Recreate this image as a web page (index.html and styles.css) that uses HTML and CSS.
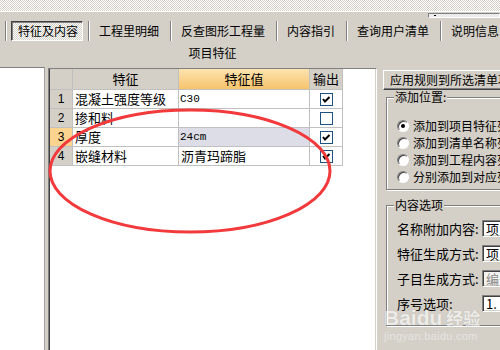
FILE: index.html
```html
<!DOCTYPE html>
<html lang="zh">
<head>
<meta charset="utf-8">
<title>项目特征</title>
<link rel="stylesheet" href="styles.css">
</head>
<body>
<div class="band"></div>
<div class="strip"><div class="slider"><span class="dot"></span></div></div>
<div class="tabs">
  <span class="sep"></span>
  <span class="tab active">特征及内容</span>
  <span class="sep"></span>
  <span class="tab">工程里明细</span>
  <span class="sep"></span>
  <span class="tab">反查图形工程量</span>
  <span class="sep"></span>
  <span class="tab">内容指引</span>
  <span class="sep"></span>
  <span class="tab">查询用户清单</span>
  <span class="sep"></span>
  <span class="tab">说明信息</span>
</div>
<div class="main">
  <div class="left"></div>
  <div class="center">
    <div class="title">项目特征</div>
    <div class="panel">
      <div class="grid">
        <div class="hd"></div>
        <div class="hd">特征</div>
        <div class="hd hd-sel">特征值</div>
        <div class="hd">输出</div>

        <div class="num">1</div>
        <div class="cell">混凝土强度等级</div>
        <div class="cell val">C30</div>
        <div class="cell chk"><span class="box"><svg viewBox="0 0 11 11" width="11" height="11"><polyline points="2,5 4,7.5 8.5,3" fill="none" stroke="#000" stroke-width="2"/></svg></span></div>

        <div class="num">2</div>
        <div class="cell">掺和料</div>
        <div class="cell val"></div>
        <div class="cell chk"><span class="box"></span></div>

        <div class="num num-sel">3</div>
        <div class="cell">厚度</div>
        <div class="cell val val-sel">24cm</div>
        <div class="cell chk"><span class="box"><svg viewBox="0 0 11 11" width="11" height="11"><polyline points="2,5 4,7.5 8.5,3" fill="none" stroke="#000" stroke-width="2"/></svg></span></div>

        <div class="num">4</div>
        <div class="cell">嵌缝材料</div>
        <div class="cell">沥青玛蹄脂</div>
        <div class="cell chk"><span class="box"><svg viewBox="0 0 11 11" width="11" height="11"><polyline points="2,5 4,7.5 8.5,3" fill="none" stroke="#000" stroke-width="2"/></svg></span></div>
      </div>
    </div>
  </div>
  <div class="right">
    <div class="btn">应用规则到所选清单项</div>
    <fieldset class="grp grp1">
      <legend>添加位置:</legend>
      <div class="radio-row"><span class="radio on"></span>添加到项目特征列</div>
      <div class="radio-row"><span class="radio"></span>添加到清单名称列</div>
      <div class="radio-row"><span class="radio"></span>添加到工程内容列</div>
      <div class="radio-row"><span class="radio"></span>分别添加到对应列</div>
    </fieldset>
    <fieldset class="grp grp2">
      <legend>内容选项</legend>
      <div class="field"><span class="lbl">名称附加内容:</span><span class="inp">项目</span></div>
      <div class="field"><span class="lbl">特征生成方式:</span><span class="inp">项目</span></div>
      <div class="field"><span class="lbl">子目生成方式:</span><span class="inp dis">编号</span></div>
      <div class="field"><span class="lbl">序号选项:</span><span class="inp">1.</span></div>
    </fieldset>
  </div>
</div>
<svg class="annot" width="500" height="350" viewBox="0 0 500 350">
  <ellipse cx="190" cy="171" rx="140" ry="61" fill="none" stroke="#f2393b" stroke-width="3"/>
</svg>
<div class="watermark">
  <div class="wm-logo">Baidu<span class="wm-cn">经验</span></div>
  <div class="wm-url">jingyan.baidu.com</div>
</div>
</body>
</html>
```
FILE: styles.css
```css
html, body {
  margin: 0;
  padding: 0;
}
body {
  width: 500px;
  height: 350px;
  overflow: hidden;
  position: relative;
  background: #d4d0c8;
  font-family: "Noto Sans CJK SC", "Noto Sans", sans-serif;
  font-size: 12px;
  color: #000;
}
.band {
  height: 11px;
  background: repeating-conic-gradient(#ffffff 0 25%, #d4d0c8 0 50%) 0 0 / 2px 2px;
  border-bottom: 1px solid #fff;
}
.strip {
  height: 9px;
  display: flex;
  justify-content: flex-end;
  align-items: flex-start;
}
.slider {
  margin-top: 1px;
  width: 70px;
  height: 3px;
  border: 1px solid;
  border-color: #808080 #fff #fff #808080;
  background: #ececec;
  display: flex;
  align-items: center;
}
.dot {
  width: 2px;
  height: 1px;
  margin-left: 5px;
  background: #000;
}
.tabs {
  display: flex;
  height: 20px;
  padding-left: 5px;
  white-space: nowrap;
  overflow: hidden;
}
.sep {
  flex: none;
  width: 0;
  border-left: 1px solid #808080;
  border-right: 1px solid #fff;
}
.tab {
  flex: none;
  padding: 0 11px 0 9px;
  line-height: 20px;
}
.tab.active {
  margin: 0 5px 0 4px;
  padding: 0 4px 0 6px;
  line-height: 18px;
  border: 1px solid;
  border-color: #404040 #fff #fff #404040;
  box-shadow: inset 1px 1px 0 #808080;
  background: repeating-conic-gradient(#ffffff 0 25%, #d4d0c8 0 50%) 0 0 / 2px 2px;
}
.main {
  display: flex;
  align-items: flex-start;
  height: 309px;
  overflow: hidden;
}
.left {
  flex: none;
  width: 44px;
  height: 282px;
  margin-top: 26px;
  margin-right: 3px;
  background: #fff;
  border-top: 1px solid #808080;
  border-right: 1px solid #a0a0a0;
}
.center {
  flex: none;
  width: 329px;
}
.title {
  height: 27px;
  box-sizing: border-box;
  padding-top: 5px;
  line-height: 14px;
  text-align: center;
}
.panel {
  height: 282px;
  box-sizing: border-box;
  background: #fff;
  border-top: 1px solid #808080;
  border-left: 1px solid #808080;
  border-right: 1px solid #fff;
  box-shadow: inset 1px 0 0 #404040, inset -1px 0 0 #d4d0c8;
}
.grid {
  display: grid;
  grid-template-columns: 22px 105px 130px 32px;
  grid-template-rows: 20px repeat(4, 18px);
  gap: 1px;
  padding: 0 1px 1px 0;
  margin-left: 1px;
  width: max-content;
  background: #c0c0c0;
}
.hd {
  background: #d4d0c8;
  text-align: center;
  line-height: 20px;
  font-size: 13px;
}
.hd-sel {
  background: linear-gradient(#fde4b0, #f6c36c);
}
.num {
  background: #d4d0c8;
  text-align: center;
  line-height: 18px;
  font-family: "Liberation Sans", sans-serif;
}
.num-sel {
  background: #fcd48f;
}
.cell {
  background: #fff;
  line-height: 18px;
  padding-left: 2px;
  white-space: nowrap;
  overflow: hidden;
  font-size: 13px;
}
.val {
  font-family: "Liberation Mono", monospace;
  font-size: 11px;
  padding-left: 1px;
}
.val-sel {
  background: #dcdde6;
}
.chk {
  padding: 0;
  display: flex;
  align-items: center;
  justify-content: center;
}
.box {
  width: 11px;
  height: 11px;
  border: 1px solid #1c5180;
  background: #fff;
  display: flex;
}
.right {
  flex: none;
  width: 118px;
  height: 280px;
  overflow: hidden;
  margin-left: 5px;
  padding-top: 29px;
}
.btn {
  width: 140px;
  height: 20px;
  box-sizing: border-box;
  margin-left: 1px;
  padding-left: 6px;
  line-height: 18px;
  white-space: nowrap;
  overflow: hidden;
  border: 1px solid;
  border-color: #fff #404040 #404040 #fff;
  box-shadow: inset -1px -1px 0 #808080;
}
.grp {
  width: 130px;
  margin: 1px 0 0 4px;
  min-width: 0;
  border: 1px solid #808080;
  box-shadow: inset 1px 1px 0 #fff, 1px 1px 0 #fff;
  white-space: nowrap;
}
.grp legend {
  padding: 0 1px;
  line-height: 12px;
  background: #d4d0c8;
  position: relative;
}
.grp1 {
  padding: 14px 0 4px 7px;
}
.grp2 {
  margin-top: 9px;
  padding: 9px 0 13px 7px;
}
.radio-row {
  display: flex;
  align-items: center;
  height: 17px;
  gap: 4px;
}
.radio {
  flex: none;
  width: 10px;
  height: 10px;
  margin-left: 3px;
  border-radius: 50%;
  background: #fff;
  border: 1px solid;
  border-color: #808080 #fff #fff #808080;
  box-shadow: inset 1px 1px 0 #404040;
  display: flex;
  align-items: center;
  justify-content: center;
}
.radio.on::after {
  content: "";
  width: 4px;
  height: 4px;
  border-radius: 50%;
  background: #000;
}
.field {
  display: flex;
  align-items: center;
  height: 17px;
  margin-bottom: 8px;
}
.field:last-child {
  margin-bottom: 0;
}
.lbl {
  flex: none;
  width: 85px;
  margin-left: 3px;
  font-size: 13px;
}
.inp {
  flex: none;
  width: 60px;
  height: 17px;
  box-sizing: border-box;
  padding-left: 3px;
  line-height: 15px;
  background: #fff;
  border: 1px solid;
  border-color: #808080 #fff #fff #808080;
  box-shadow: inset 1px 1px 0 #404040, inset -1px -1px 0 #d4d0c8;
  font-size: 13px;
}
.inp.dis {
  color: #8a8a8a;
  background: #f4f3f0;
}
.annot {
  position: absolute;
  left: 0;
  top: 0;
  pointer-events: none;
}
.watermark {
  position: absolute;
  left: 384px;
  top: 306px;
  color: #fff;
  opacity: 0.6;
  pointer-events: none;
}
.wm-logo {
  font-family: "Liberation Sans", sans-serif;
  font-weight: bold;
  font-size: 21px;
  line-height: 24px;
  text-shadow: 0 0 1px #9a9a9a;
}
.wm-cn {
  font-family: "Noto Sans CJK SC", sans-serif;
  font-size: 17px;
  margin-left: 4px;
}
.wm-url {
  font-family: "Liberation Sans", sans-serif;
  font-size: 11px;
  line-height: 12px;
  letter-spacing: 0.3px;
  color: #f2f2f2;
}
```
